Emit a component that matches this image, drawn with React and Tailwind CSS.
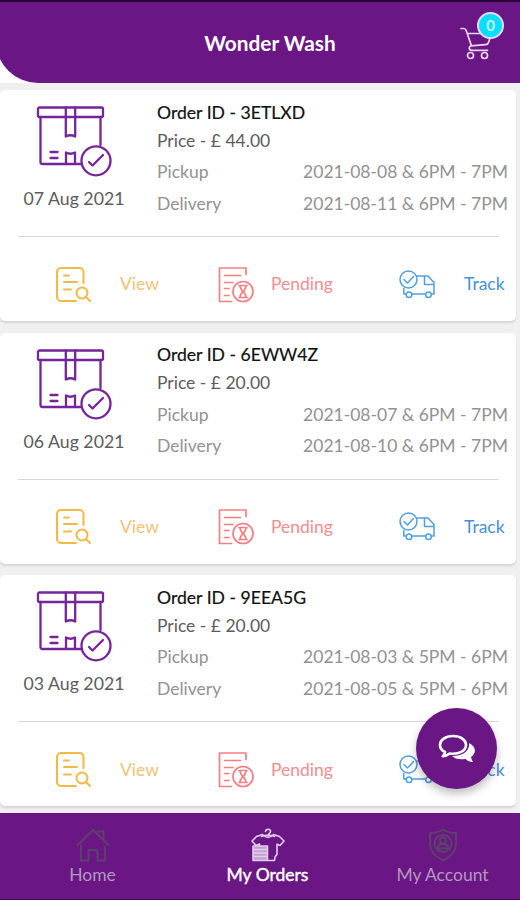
import React from "react";

const orders = [
  { id: "3ETLXD", price: "44.00", date: "07 Aug 2021", pickup: "2021-08-08 & 6PM - 7PM", delivery: "2021-08-11 & 6PM - 7PM" },
  { id: "6EWW4Z", price: "20.00", date: "06 Aug 2021", pickup: "2021-08-07 & 6PM - 7PM", delivery: "2021-08-10 & 6PM - 7PM" },
  { id: "9EEA5G", price: "20.00", date: "03 Aug 2021", pickup: "2021-08-03 & 5PM - 6PM", delivery: "2021-08-05 & 5PM - 6PM" },
];

function CartIcon() {
  return (
    <svg className="h-[34px] w-[34px]" viewBox="0 0 34 34" fill="none" stroke="#ead6f2" strokeWidth="1.7" strokeLinecap="round" strokeLinejoin="round">
      <path d="M1 2.500h2.500q2 0 2.700 2L11.500 20M7.500 7.500h24L28.500 16.500q-.5 2-3 2.200L10.800 19.800c-2.300 1-2 4.500.7 4.500H27.500" />
      <circle cx="10.500" cy="29.500" r="3" />
      <circle cx="24.500" cy="29.500" r="3" />
    </svg>
  );
}

function BoxIcon() {
  return (
    <svg className="h-[72px] w-[76px]" viewBox="0 0 76 72" fill="none" stroke="#75259a" strokeWidth="2.300" strokeLinecap="round" strokeLinejoin="round">
      <rect x="2" y="2.500" width="65" height="9.500" rx="1.500" />
      <path d="M4.500 12v45a2 2 0 0 0 2 2H45.500M64.500 12v28" />
      <path d="M29.800 2.500v29q4.700-2.500 9.400 0v-29" />
      <path d="M30 59V47.500q4.500 2.500 9 0V59" />
      <path d="M14.500 47h7M14.500 53h7" />
      <circle cx="60" cy="55.800" r="14.500" />
      <path d="m53 57 3.500 3.500L67 50" />
    </svg>
  );
}

function ViewIcon() {
  return (
    <svg className="h-9 w-9" viewBox="0 0 36 36" fill="none" stroke="#f2b944" strokeWidth="2" strokeLinecap="round" strokeLinejoin="round">
      <path d="M21 34H6a4 4 0 0 1-4-4V5a4 4 0 0 1 4-4h18.500a4 4 0 0 1 4 4v11" />
      <path d="M9 8.500h5M9 15h13M9 22.500h7" />
      <circle cx="27" cy="26" r="5.500" />
      <path d="m31 30 4 4" />
    </svg>
  );
}

function PendingIcon() {
  return (
    <svg className="h-9 w-9" viewBox="0 0 36 36" fill="none" stroke="#f47f82" strokeWidth="1.700" strokeLinecap="round" strokeLinejoin="round">
      <path d="M13.500 34.500H1.500V1H28v6.500" />
      <path d="M6.500 8.500h16M6.500 15.500h8.500M6.500 21.500H11M6.500 28.500H11" />
      <circle cx="25" cy="24.500" r="10" />
      <path d="M21 18.500h8M21 30.500h8M22 18.500c0 3.500 2 4 2.500 6-.5 2-2.500 2.500-2.500 6M28 18.500c0 3.500-2 4-2.500 6 .5 2 2.500 2.500 2.500 6" />
    </svg>
  );
}

function TrackIcon() {
  return (
    <svg className="h-[30px] w-9" viewBox="0 0 36 30" fill="none" stroke="#4f9fdf" strokeWidth="1.500" strokeLinecap="round" strokeLinejoin="round">
      <circle cx="9.500" cy="9.500" r="8.500" />
      <path d="m5 9.500 3.500 3.500 6-6.500" />
      <path d="M18 6h11l6 6.500V24h-2.500M4.800 18.500V24H7M13 24h13.500M25.500 6v8.500H35" />
      <circle cx="10" cy="24.800" r="2.800" />
      <circle cx="29.500" cy="24.800" r="2.800" />
    </svg>
  );
}

function ChatIcon() {
  return (
    <svg className="h-[30px] w-[38px]" viewBox="0 0 38 30">
      <path d="M31 9c8 4 7 11 2 14 .3 2 1 3 2 5-3 0-5.500-1.200-7.500-3C21 26 16.500 24.500 14 22c11 0 18-5 17-13Z" fill="#fff" />
      <path d="M15 2C7.500 2 2 6 2 11c0 3 1.800 5.500 5 7-.3 1.700-1 3-2.200 4.300 2.700-.3 5-1.300 6.800-2.800C21 20.500 28 17 28 11c0-5-5.500-9-13-9Z" fill="#6a1785" stroke="#fff" strokeWidth="2.600" strokeLinejoin="round" />
    </svg>
  );
}

function HomeIcon() {
  return (
    <svg className="h-[34px] w-[34px]" viewBox="0 0 34 34" fill="none" stroke="#5d4268" strokeWidth="1.900" strokeLinejoin="round" strokeLinecap="round">
      <path d="M1.500 17 17 2l15.500 15M22 3.500h5.500V11M5 17v15.500h7.500V22h9v10.500H29V19" />
    </svg>
  );
}

function OrdersIcon() {
  return (
    <svg className="h-[34px] w-[34px]" viewBox="0 0 34 34" fill="none" stroke="#e3cdec" strokeWidth="1.600" strokeLinejoin="round" strokeLinecap="round">
      <path d="M14.500 3.500c.3-3 5-3 5 0 0 2-2.500 1.800-2.500 4.500M10.500 8.500Q17 5.500 23.500 8.500" />
      <path d="M8.500 17.500V16L5 17.500l-4-4.500 4.500-4.500L11.500 6.500q5.500 6 11 0l6 2 4.500 4.500-4 4.500-3-1.300v10L24 29l-.5 3.500H17" />
      <path d="M2 18h14.500v14.500H2zM2 21.500h14.500M2 25h14.500M2 28.500h14.500" fill="#c39ed2" />
    </svg>
  );
}

function AccountIcon() {
  return (
    <svg className="h-[34px] w-[34px]" viewBox="0 0 34 34" fill="none" stroke="#5d4268" strokeWidth="1.900" strokeLinejoin="round">
      <path d="M17 1.500C13 4 8 5 4 5v11c0 8 7 13.500 13 16.500C23 29.500 30 24 30 16V5c-4 0-9-1-13-3.500Z" />
      <circle cx="17" cy="15.500" r="8.500" />
      <circle cx="17" cy="12.500" r="3" />
      <path d="M11.500 20.500c.5-6 10.500-6 11 0Z" />
    </svg>
  );
}

function OrderCard({ order }) {
  return (
    <article className="h-[231px] w-[516px] shrink-0 rounded-[5px] bg-white shadow-[0_2px_2px_#d5d5d5]">
      <div className="flex h-[146px]">
        <div className="flex w-[148px] flex-col items-center pt-[15px]">
          <BoxIcon />
          <p className="mt-[10px] text-[17.700px] leading-6 whitespace-nowrap text-[#5c5c5c]">{order.date}</p>
        </div>
        <div className="flex-1 pt-[10.500px] pr-[8px] pl-[9px] text-[17.500px] leading-6 whitespace-nowrap text-[#929292]">
          <h2 className="text-[17.600px] text-[#111] [-webkit-text-stroke:0.2px_#111]">Order ID - {order.id}</h2>
          <p className="mt-1 text-[#5c5c5c]">Price - £ {order.price}</p>
          <div className="mt-[7.500px] flex justify-between"><span>Pickup</span><span>{order.pickup}</span></div>
          <div className="mt-[7.500px] flex justify-between"><span>Delivery</span><span>{order.delivery}</span></div>
        </div>
      </div>
      <div className="mr-[17px] ml-[18px] h-px bg-[#d8d8d8]" />
      <div className="flex h-[84px] items-center pt-[11px] pl-[55px] text-[17.500px]">
        <button type="button" className="flex w-[163px] items-center gap-[29px] text-[#f3c274]"><ViewIcon />View</button>
        <button type="button" className="flex w-[181px] items-center gap-[17px] text-[#f78c8e]"><PendingIcon />Pending</button>
        <button type="button" className="flex items-center gap-[29px] text-[#4790da]"><TrackIcon />Track</button>
      </div>
    </article>
  );
}

export default function App() {
  return (
    <div className="relative flex h-[900px] w-[520px] flex-col overflow-hidden bg-[#f0f0f0] font-['Lato',sans-serif]">
      <header className="h-[83px] shrink-0 bg-white">
        <div className="-ml-1 grid h-full grid-cols-[1fr_auto_1fr] items-center rounded-bl-[42px] border-t-2 border-[#260332] bg-[#6a1785] pl-[30px]">
          <span />
          <h1 className="mt-[1px] mr-[6px] text-[20.800px] font-bold text-white">Wonder Wash</h1>
          <div className="relative mr-[26px] justify-self-end">
            <CartIcon />
            <span className="absolute -top-[14px] left-[17px] flex h-[27px] w-[27px] items-center justify-center rounded-full border-2 border-[#e5dcf1] bg-[#08dfff] text-[15px] font-bold text-[#c9f7ff]">0</span>
          </div>
        </div>
      </header>
      <main className="flex h-[730px] shrink-0 flex-col gap-[11.700px] overflow-hidden pt-[7px]">
        {orders.map((order) => <OrderCard key={order.id} order={order} />)}
      </main>
      <nav className="grid h-[87px] shrink-0 grid-cols-[175px_175px_175px] border-b border-[#3c0c4c] bg-[#6a1785] pt-[15px] pl-[5px] text-[17.500px] leading-6 text-[#b397bf]">
        <div className="flex flex-col items-center gap-px"><HomeIcon />Home</div>
        <div className="flex flex-col items-center gap-px text-white [-webkit-text-stroke:0.4px_#fff]"><OrdersIcon />My Orders</div>
        <div className="flex flex-col items-center gap-px"><AccountIcon />My Account</div>
      </nav>
      <button type="button" className="absolute top-[708px] left-[416px] flex h-[81px] w-[81px] items-center justify-center rounded-full bg-[#6a1785] shadow-[0_5px_9px_rgba(0,0,0,0.25)]" aria-label="Chat">
        <ChatIcon />
      </button>
    </div>
  );
}
